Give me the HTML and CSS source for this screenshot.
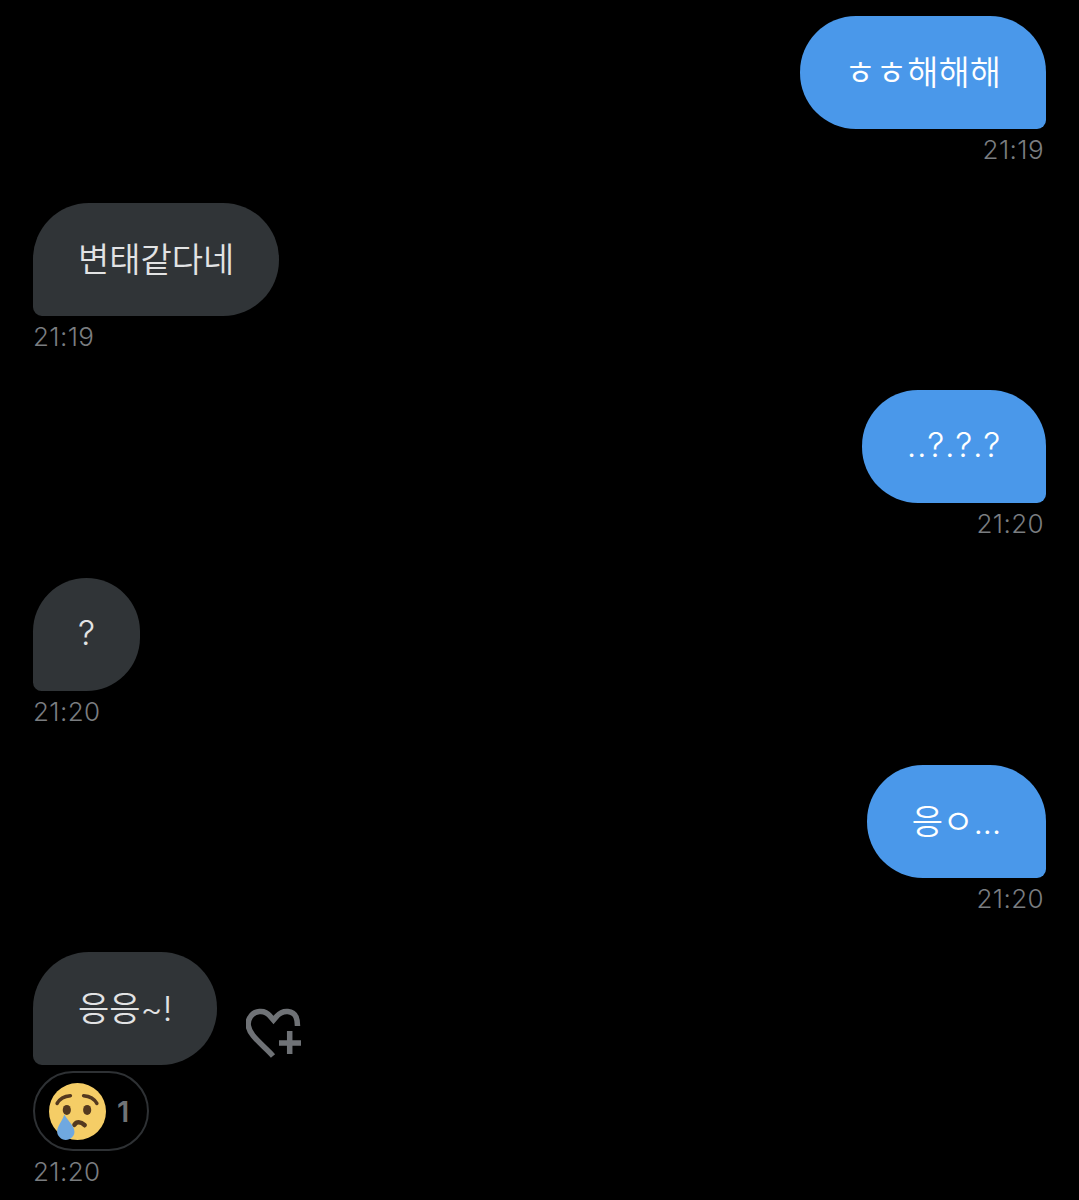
FILE: index.html
```html
<!DOCTYPE html>
<html lang="ko">
<head>
<meta charset="utf-8">
<title>Chat</title>
<link rel="stylesheet" href="styles.css">
</head>
<body>
<main class="chat">
  <div class="msg sent"><div class="bubble">ㅎㅎ해해해</div><div class="time">21:19</div></div>
  <div class="msg recv"><div class="bubble">변태같다네</div><div class="time">21:19</div></div>
  <div class="msg sent"><div class="bubble wide">..?.?.?</div><div class="time">21:20</div></div>
  <div class="msg recv"><div class="bubble">?</div><div class="time">21:20</div></div>
  <div class="msg sent"><div class="bubble tight">응ㅇ...</div><div class="time">21:20</div></div>
  <div class="msg recv">
    <div class="bubble-row">
      <div class="bubble">응응~!</div>
      <svg class="heart" width="56" height="51" viewBox="0 0 56 51" aria-hidden="true">
        <path d="M27 48 C21 41 13 35 7 27.500 C1.500 21 1 14 4 9.500 C8 2.500 18.500 1 24 8 L27.500 12 L31 8 C37 1 47.500 2.500 50 9 C51.500 12 51.500 15 51.500 18" fill="none" stroke="#6f7276" stroke-width="5.500"/>
        <path d="M43.700 23 V46 M33 35 H55" fill="none" stroke="#6f7276" stroke-width="5.500"/>
      </svg>
    </div>
    <div class="reaction">
      <svg class="emoji" width="57" height="57" viewBox="0 0 56 56" aria-hidden="true">
        <circle cx="28" cy="28" r="28" fill="#f5cd66"/>
        <path d="M8 20 C10.500 15.500 15 13 21 12.500 M34 12.500 C40 13 44.500 15.500 47 20" fill="none" stroke="#54391f" stroke-width="3.500" stroke-linecap="round"/>
        <ellipse cx="17.500" cy="26.500" rx="4" ry="5" fill="#54391f"/>
        <ellipse cx="37.500" cy="26.500" rx="4" ry="5" fill="#54391f"/>
        <path d="M25 41 C27 38 31 37.500 35 41.500" fill="none" stroke="#54391f" stroke-width="4.500" stroke-linecap="round"/>
        <path d="M15 31 C19 38 25 42 25 48 C25 52.500 21 56 16.500 56 C12 56 8 52 8 48 C8 42 13 38 15 31 Z" fill="#6fa8e0"/>
      </svg>
      <span class="count">1</span>
    </div>
    <div class="time">21:20</div>
  </div>
</main>
</body>
</html>
```
FILE: styles.css
```css
* { box-sizing: border-box; }
html, body { margin: 0; background: #000; }
body { height: 1200px; overflow: hidden; font-family: "Inter", "Noto Sans CJK KR", sans-serif; }
.chat { display: flex; flex-direction: column; gap: 32.200px; padding: 16px 33px 0; }
.msg { display: flex; flex-direction: column; }
.sent { align-items: flex-end; }
.recv { align-items: flex-start; }
.bubble {
  height: 113px;
  padding: 0 45px 4px;
  display: flex;
  align-items: center;
  font-family: "Inter", "Noto Sans CJK KR", sans-serif;
  font-size: 34px;
  font-weight: 350;
  font-kerning: none;
  white-space: nowrap;
}
.wide { letter-spacing: 0.700px; }
.tight { letter-spacing: -0.400px; }
.sent .bubble { background: #4a98ea; color: #fff; border-radius: 56px 56px 9px 56px; }
.recv .bubble { background: #303437; color: #e2e3e4; border-radius: 56px 56px 56px 9px; }
.time { height: 42px; line-height: 42px; font-size: 26px; font-weight: 300; color: #7a7d80; padding: 0 2px 0 0; letter-spacing: 0.400px; }
.bubble-row { display: flex; align-items: flex-end; gap: 29px; }
.heart { margin-bottom: 6px; }
.reaction {
  display: flex; align-items: center; gap: 11px;
  margin-top: 6px; height: 80px; width: 116px; padding: 2px 14px 0;
  border: 2.500px solid #2e3134; border-radius: 40px;
}
.count { font-size: 29px; font-weight: 600; color: #707376; }
```
